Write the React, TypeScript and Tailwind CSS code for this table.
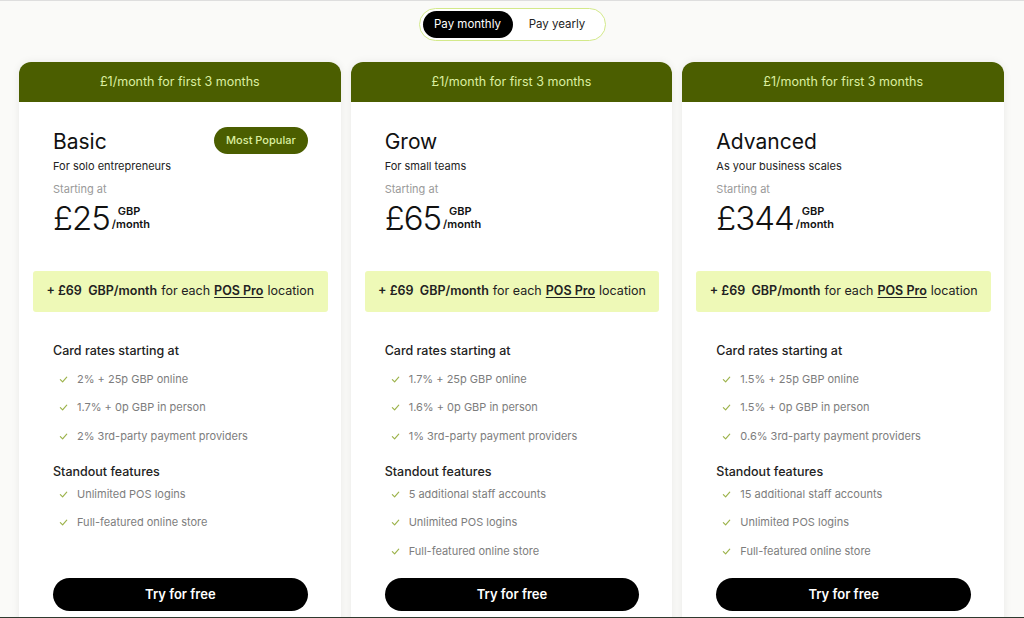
import React from "react";

type Plan = {
  name: string;
  tagline: string;
  price: string;
  badge?: boolean;
  rates: string[];
  features: string[];
};

const plans: Plan[] = [
  {
    name: "Basic",
    tagline: "For solo entrepreneurs",
    price: "£25",
    badge: true,
    rates: ["2% + 25p GBP online", "1.7% + 0p GBP in person", "2% 3rd-party payment providers"],
    features: ["Unlimited POS logins", "Full-featured online store"],
  },
  {
    name: "Grow",
    tagline: "For small teams",
    price: "£65",
    rates: ["1.7% + 25p GBP online", "1.6% + 0p GBP in person", "1% 3rd-party payment providers"],
    features: ["5 additional staff accounts", "Unlimited POS logins", "Full-featured online store"],
  },
  {
    name: "Advanced",
    tagline: "As your business scales",
    price: "£344",
    rates: ["1.5% + 25p GBP online", "1.5% + 0p GBP in person", "0.6% 3rd-party payment providers"],
    features: ["15 additional staff accounts", "Unlimited POS logins", "Full-featured online store"],
  },
];

const Check = () => (
  <svg width="9" height="9" viewBox="0 0 10 10" fill="none" className="shrink-0">
    <path d="M1.5 5.2 L4 7.6 L8.6 2.4" stroke="#9db34c" strokeWidth="1.3" strokeLinecap="round" strokeLinejoin="round" />
  </svg>
);

const Item = ({ text }: { text: string }) => (
  <li className="flex items-center h-4 pl-[6px]">
    <Check />
    <span className="ml-[9px] text-[11px] text-[#7d7d7d]">{text}</span>
  </li>
);

const PlanCard = ({ plan }: { plan: Plan }) => (
  <div className="flex flex-col bg-white rounded-t-[12px] overflow-hidden shadow-[0_0_8px_rgba(0,0,0,0.07)]">
    <div className="h-10 flex items-center justify-center bg-[#4b5e00] text-[12.5px] text-[#dcefa0]">
      £1/month for first 3 months
    </div>
    <div className="flex flex-col flex-1 pl-[34px] pr-[33px] pt-[26px] pb-6">
      <div className="flex items-start justify-between">
        <h2 className="text-[21px] leading-[28px] text-[#111]">{plan.name}</h2>
        {plan.badge && (
          <span className="-mt-px h-[27px] px-[12px] flex items-center rounded-full bg-[#4b5e00] text-[11px] font-medium text-[#dcefa0]">
            Most Popular
          </span>
        )}
      </div>
      <p className="mt-[2px] text-[11px] leading-4 text-[#222]">{plan.tagline}</p>
      <p className="mt-[7px] text-[11px] leading-4 text-[#9a9a9a]">Starting at</p>
      <div className="mt-[3px] flex items-center">
        <span className="text-[33px] leading-[36px] font-light tracking-[-1px] text-[#111]">{plan.price}</span>
        <span className="ml-[2px] flex flex-col text-[11px] font-semibold leading-[13px] text-[#111]">
          <span className="pl-[6px]">GBP</span>
          <span>/month</span>
        </span>
      </div>
      <div className="mt-[35px] -ml-[20px] -mr-[20px] h-[41px] flex items-center justify-center rounded-[3px] bg-[#eef9b7] text-[12.5px] text-[#222]">
        <span className="font-semibold whitespace-pre">+ £69  GBP/month</span>
        <span className="ml-1">for each</span>
        <span className="ml-1 font-semibold underline underline-offset-2">POS Pro</span>
        <span className="ml-1">location</span>
      </div>
      <h3 className="mt-[30px] text-[12.5px] leading-[18px] font-medium text-[#222]">Card rates starting at</h3>
      <ul className="mt-[11px] flex flex-col gap-[12.5px]">
        {plan.rates.map((r) => (
          <Item key={r} text={r} />
        ))}
      </ul>
      <h3 className="mt-[19px] text-[12.5px] leading-[18px] font-medium text-[#222]">Standout features</h3>
      <ul className="mt-[5px] flex flex-col gap-[12.5px] flex-1">
        {plan.features.map((f) => (
          <Item key={f} text={f} />
        ))}
      </ul>
      <button className="mt-[19px] h-[33px] w-full rounded-full bg-black text-[13px] font-semibold text-white">
        Try for free
      </button>
    </div>
  </div>
);

export default function App() {
  return (
    <div
      className="h-[618px] overflow-hidden bg-[#fafaf8] border-t border-[#dedede] border-b border-b-[#2f3a2f] flex flex-col"
      style={{ fontFamily: "Inter, 'Noto Sans', sans-serif" }}
    >
      <div className="flex justify-center pt-[7px]">
        <div className="flex items-center h-[33px] w-[187px] px-[3px] rounded-full border-[1.5px] border-[#d3e98a] bg-white">
          <button className="h-[27px] w-[90px] rounded-full bg-black text-[11.5px] text-white">Pay monthly</button>
          <button className="flex-1 h-[27px] text-[11.5px] text-[#222]">Pay yearly</button>
        </div>
      </div>
      <div className="mt-[21px] grid grid-cols-3 gap-[10px] pl-[19px] pr-[20px]">
        {plans.map((p) => (
          <PlanCard key={p.name} plan={p} />
        ))}
      </div>
    </div>
  );
}
